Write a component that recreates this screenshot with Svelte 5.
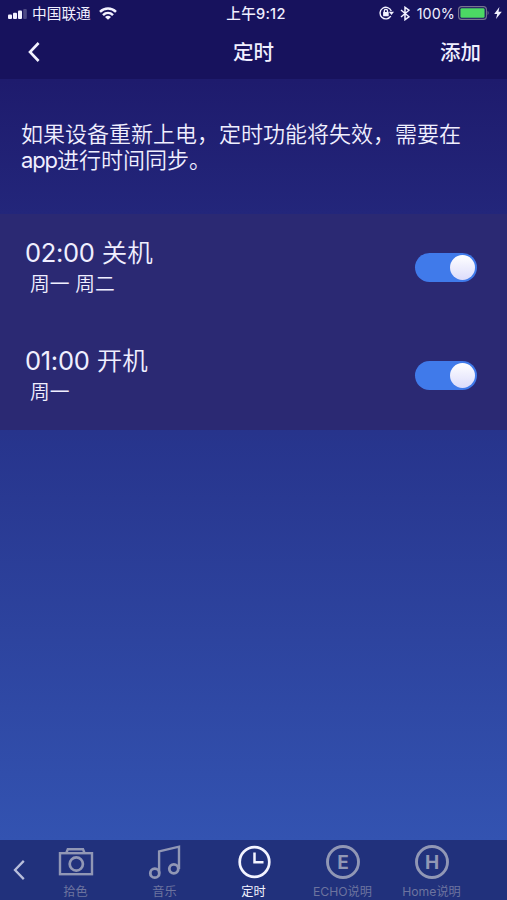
<script>
    let timers = $state([
        { time: '02:00', action: '关机', days: '周一 周二', on: true },
        { time: '01:00', action: '开机', days: '周一', on: true }
    ]);

    let activeTab = $state('timer');

    const tabs = [
        { id: 'camera', label: '拾色' },
        { id: 'music', label: '音乐' },
        { id: 'timer', label: '定时' },
        { id: 'echo', label: 'ECHO说明', letter: 'E' },
        { id: 'home', label: 'Home说明', letter: 'H' }
    ];
</script>

<div class="screen">
    <header>
        <div class="status">
            <div class="carrier">
                <svg class="signal" width="20" height="10" viewBox="0 0 20 10" fill="#f3f2ff">
                    <rect x="0" y="5.6" width="4" height="4.4" rx="1" />
                    <rect x="5" y="3.8" width="4" height="6.2" rx="1" />
                    <rect x="10" y="1.6" width="4" height="8.4" rx="1" />
                    <rect x="15.2" y="0" width="3.6" height="10" rx="1" opacity="0.25" />
                </svg>
                <span>中国联通</span>
                <svg class="wifi" width="18" height="13" viewBox="0 0 18 13" fill="none" stroke="#f3f2ff" stroke-width="2.5">
                    <path d="M1 4.9C5.6 .5 12.4 .5 17 4.9" />
                    <path d="M4 8.2C6.9 5.4 11.1 5.4 14 8.2" />
                    <path d="M9 12.8L6 10Q9 7.6 12 10Z" fill="#f3f2ff" stroke="none" />
                </svg>
            </div>
            <span class="clock">上午9:12</span>
            <div class="indicators">
                <svg width="15" height="14" viewBox="0 0 15 14" fill="none" stroke="#f3f2ff" stroke-width="1.4">
                    <path d="M12.3 5A5.8 5.8 0 1 0 11.8 10.2" />
                    <path d="M9.8 5.8H15L12.5 8.9Z" fill="#f3f2ff" stroke="none" />
                    <rect x="4.1" y="6.1" width="5.6" height="4.1" rx=".5" fill="#f3f2ff" stroke="none" />
                    <path d="M5.3 6.5V5a1.6 1.6 0 0 1 3.2 0V6.5" />
                </svg>
                <svg class="bluetooth" width="10" height="15" viewBox="0 0 10 15" fill="none" stroke="#f3f2ff" stroke-width="1.5">
                    <path d="M1 4L9 10.8L5 13.7V1.3L9 4.2L1 11" />
                </svg>
                <span class="percent">100%</span>
                <svg class="battery" width="32" height="14" viewBox="0 0 32 14">
                    <rect x=".6" y=".6" width="27.8" height="12.8" rx="3" fill="none" stroke="#77758f" stroke-width="1.1" />
                    <rect x="2.4" y="2.2" width="24.2" height="9.6" rx="1.4" fill="#4cd864" />
                    <path d="M29.6 4.6Q31.6 7 29.6 9.4Z" fill="#77758f" />
                </svg>
                <svg class="bolt" width="8" height="12" viewBox="0 0 8 12" fill="#f3f2ff">
                    <path d="M5.4 0L.2 6.9H3.2L2 12L7.8 4.7H4.5Z" />
                </svg>
            </div>
        </div>
        <nav>
            <button class="back" aria-label="返回">
                <svg width="12" height="20" viewBox="0 0 12 20" fill="none" stroke="#f3f2ff" stroke-width="2.6">
                    <path d="M10.6 1L2 10L10.6 19" />
                </svg>
            </button>
            <h1>定时</h1>
            <button class="add">添加</button>
        </nav>
    </header>

    <p class="notice">如果设备重新上电，定时功能将失效，需要在<span>app</span>进行时间同步。</p>

    <ul class="timers">
        {#each timers as timer}
            <li>
                <div>
                    <div class="time"><span>{timer.time}</span> {timer.action}</div>
                    <div class="days">{timer.days}</div>
                </div>
                <button
                    class="switch"
                    class:on={timer.on}
                    role="switch"
                    aria-checked={timer.on}
                    aria-label={timer.time}
                    onclick={() => (timer.on = !timer.on)}
                >
                    <span class="knob"></span>
                </button>
            </li>
        {/each}
    </ul>

    <footer>
        <button class="prev" aria-label="上一页">
            <svg width="12" height="20" viewBox="0 0 12 20" fill="none" stroke="#b8bedb" stroke-width="2.3">
                <path d="M10.8 .9L2 10L10.8 19.1" />
            </svg>
        </button>
        {#each tabs as tab}
            <button class="tab" class:active={activeTab === tab.id} onclick={() => (activeTab = tab.id)}>
                <svg width="36" height="36" viewBox="0 0 36 36" fill="none" stroke="currentColor" stroke-width="2.4">
                    {#if tab.id === 'camera'}
                        <rect x="2" y="9.2" width="32" height="21" />
                        <path d="M8.3 9L9.8 5.2H25L26.5 9" />
                        <circle cx="18.3" cy="20" r="6.6" stroke-width="2.7" />
                    {:else if tab.id === 'music'}
                        <circle cx="7.8" cy="29.2" r="4.5" stroke-width="2.8" />
                        <circle cx="26.8" cy="24.8" r="4.5" stroke-width="2.8" />
                        <path d="M12.1 29V7.4L32 2.7V25" />
                    {:else if tab.id === 'timer'}
                        <circle cx="18.5" cy="18" r="14.8" stroke-width="2.7" />
                        <path d="M18.5 8.4V18.2H27.5" stroke-width="2.5" />
                    {:else}
                        <circle cx="18" cy="18" r="15.5" stroke-width="2.9" />
                        <text x="18" y="24.6" text-anchor="middle" fill="currentColor" stroke="none">{tab.letter}</text>
                    {/if}
                </svg>
                <span>{tab.label}</span>
            </button>
        {/each}
    </footer>
</div>

<style>
    :global(body) {
        margin: 0;
    }

    .screen {
        display: flex;
        flex-direction: column;
        height: 100vh;
        overflow: hidden;
        color: #f0efff;
        font-family: Inter, "Noto Sans CJK SC", sans-serif;
        background: linear-gradient(#1e1b6d 80px, #23267b 214px, #27348c 432px, #3353b1 840px);
    }

    button {
        display: block;
        margin: 0;
        padding: 0;
        border: none;
        background: none;
        color: inherit;
        font: inherit;
        cursor: pointer;
    }

    svg {
        display: block;
        flex-shrink: 0;
    }

    /* --- HEADER --- */
    header {
        height: 79px;
        flex-shrink: 0;
        background: #17125d;
    }

    .status {
        display: grid;
        grid-template-columns: 1fr auto 1fr;
        align-items: center;
        height: 26px;
        padding: 0 5px 0 8px;
        font-size: 14.5px;
        line-height: 28px;
    }

    .carrier,
    .indicators {
        display: flex;
        align-items: center;
    }

    .indicators svg,
    .wifi {
        margin-top: -2px;
    }

    .carrier span {
        margin: 0 8px 0 4px;
        font-size: 14.7px;
    }

    .signal {
        margin-top: -1px;
    }

    .clock {
        padding-left: 2px;
        font-size: 14.6px;
        font-weight: 500;
        letter-spacing: 0.25px;
    }

    .indicators {
        justify-content: flex-end;
    }

    .bluetooth {
        margin: 0 7px 0 6px;
    }

    .percent {
        font-size: 14.3px;
        letter-spacing: 0.1px;
    }

    .battery {
        margin: 0 4px 0 3px;
    }

    nav {
        display: grid;
        grid-template-columns: 1fr auto 1fr;
        align-items: center;
        height: 53px;
        padding: 0 26px 0 28px;
    }

    .back {
        margin-top: -2px;
    }

    h1,
    .add {
        margin: 0;
        font-size: 20.5px;
        font-weight: 500;
        line-height: 53px;
    }

    h1 {
        margin-left: -2px;
    }

    .add {
        justify-self: end;
    }

    /* --- CONTENT --- */
    .notice {
        box-sizing: border-box;
        height: 135px;
        margin: 0;
        padding: 42px 22px 0 21px;
        font-size: 22px;
        font-weight: 350;
        line-height: 26px;
        flex-shrink: 0;
    }

    .notice span {
        font-weight: 400;
        letter-spacing: -1.1px;
    }

    .timers {
        margin: 0;
        padding: 0;
        list-style: none;
        background: #2b2973;
    }

    li {
        box-sizing: border-box;
        display: flex;
        align-items: center;
        justify-content: space-between;
        height: 108px;
        padding: 0 30px 2px 25px;
    }

    .time {
        font-size: 25.5px;
        font-weight: 350;
        line-height: 33px;
    }

    .time span {
        font-weight: 400;
        letter-spacing: -0.3px;
    }

    .days {
        padding-left: 5px;
        font-size: 19.8px;
        font-weight: 350;
        line-height: 30px;
    }

    .switch {
        box-sizing: border-box;
        display: flex;
        align-items: center;
        width: 62px;
        height: 29px;
        padding: 0 2px;
        border-radius: 15px;
        background: #55557f;
    }

    .switch.on {
        justify-content: flex-end;
        background: #407aea;
    }

    .knob {
        width: 25px;
        height: 25px;
        border-radius: 50%;
        background: linear-gradient(#fff, #dcdcfb);
    }

    /* --- TAB BAR --- */
    footer {
        display: flex;
        height: 60px;
        margin-top: auto;
        flex-shrink: 0;
        background: #21317c;
    }

    .prev {
        width: 31px;
        padding-left: 13px;
        flex-shrink: 0;
    }

    .tab {
        display: flex;
        flex-direction: column;
        align-items: center;
        width: 89px;
        padding-top: 4px;
        color: #9197b5;
    }

    .tab span {
        margin: 2px 0 -2px;
        color: #6d749f;
        font-size: 12.2px;
        line-height: 20px;
        white-space: nowrap;
    }

    .tab.active,
    .tab.active span {
        color: #f3f4ff;
    }

    .tab text {
        font: bold 19px Inter, sans-serif;
    }
</style>
